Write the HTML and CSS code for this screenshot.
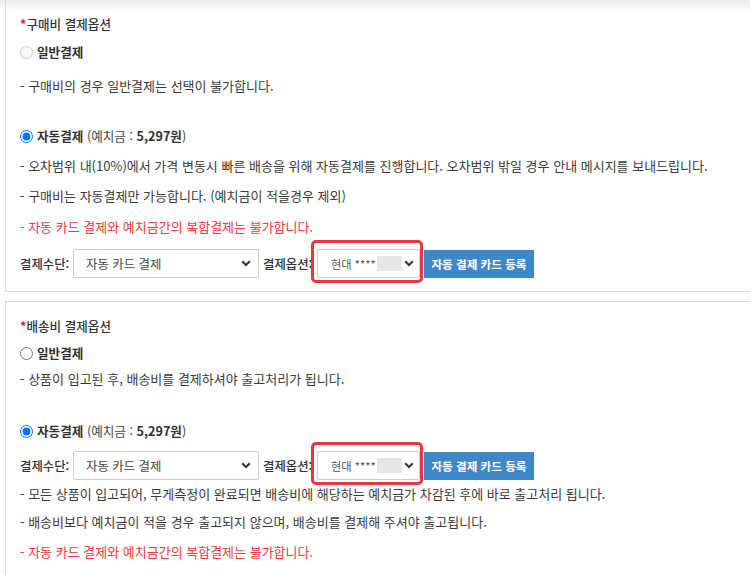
FILE: index.html
```html
<!DOCTYPE html>
<html lang="ko">
<head>
<meta charset="utf-8">
<link rel="stylesheet" href="styles.css">
</head>
<body>
<div class="page">
  <section class="panel panel-first">
    <div class="title"><span class="req">*</span>구매비 결제옵션</div>
    <label class="radio-row r-general1"><input type="radio" disabled><span class="opt-name">일반결제</span></label>
    <p class="line l-note1">- 구매비의 경우 일반결제는 선택이 불가합니다.</p>
    <label class="radio-row r-auto1"><input type="radio" checked name="p1"><span class="opt-name">자동결제</span>&nbsp;<span class="deposit">(예치금 : <b>5,297원</b>)</span></label>
    <p class="line l-a">- 오차범위 내(10%)에서 가격 변동시 빠른 배송을 위해 자동결제를 진행합니다. 오차범위 밖일 경우 안내 메시지를 보내드립니다.</p>
    <p class="line l-b">- 구매비는 자동결제만 가능합니다. (예치금이 적을경우 제외)</p>
    <p class="line warn l-c">- 자동 카드 결제와 예치금간의 복합결제는 불가합니다.</p>
    <div class="pay-row row1">
      <span class="lbl">결제수단:</span>
      <div class="select sel-method"><span>자동 카드 결제</span><svg class="chev" width="10" height="7" viewBox="0 0 10 7"><path d="M1.2 1.2L5 5l3.8-3.8" fill="none" stroke="#333" stroke-width="2"/></svg></div>
      <span class="lbl lbl2">결제옵션:</span>
      <div class="card-wrap">
        <div class="select sel-card"><span class="card-text">현대 ****<i class="mask"></i></span><svg class="chev" width="10" height="7" viewBox="0 0 10 7"><path d="M1.2 1.2L5 5l3.8-3.8" fill="none" stroke="#333" stroke-width="2"/></svg></div>
        <span class="highlight"></span>
      </div>
      <button class="btn">자동 결제 카드 등록</button>
    </div>
  </section>

  <section class="panel panel-second">
    <div class="title"><span class="req">*</span>배송비 결제옵션</div>
    <label class="radio-row r-general2"><input type="radio" name="p2"><span class="opt-name">일반결제</span></label>
    <p class="line l-note2">- 상품이 입고된 후, 배송비를 결제하셔야 출고처리가 됩니다.</p>
    <label class="radio-row r-auto2"><input type="radio" checked name="p2"><span class="opt-name">자동결제</span>&nbsp;<span class="deposit">(예치금 : <b>5,297원</b>)</span></label>
    <div class="pay-row row2">
      <span class="lbl">결제수단:</span>
      <div class="select sel-method"><span>자동 카드 결제</span><svg class="chev" width="10" height="7" viewBox="0 0 10 7"><path d="M1.2 1.2L5 5l3.8-3.8" fill="none" stroke="#333" stroke-width="2"/></svg></div>
      <span class="lbl lbl2">결제옵션:</span>
      <div class="card-wrap">
        <div class="select sel-card"><span class="card-text">현대 ****<i class="mask"></i></span><svg class="chev" width="10" height="7" viewBox="0 0 10 7"><path d="M1.2 1.2L5 5l3.8-3.8" fill="none" stroke="#333" stroke-width="2"/></svg></div>
        <span class="highlight"></span>
      </div>
      <button class="btn">자동 결제 카드 등록</button>
    </div>
    <p class="line l-d">- 모든 상품이 입고되어, 무게측정이 완료되면 배송비에 해당하는 예치금가 차감된 후에 바로 출고처리 됩니다.</p>
    <p class="line l-e">- 배송비보다 예치금이 적을 경우 출고되지 않으며, 배송비를 결제해 주셔야 출고됩니다.</p>
    <p class="line warn l-f">- 자동 카드 결제와 예치금간의 복합결제는 불가합니다.</p>
  </section>
</div>
</body>
</html>
```

FILE: styles.css
```css
html, body {
  margin: 0;
  padding: 0;
}
body {
  width: 750px;
  height: 575px;
  overflow: hidden;
  background: #fff linear-gradient(#ebebeb 0, #fff 12px) no-repeat;
  font-family: "Noto Sans CJK KR", "Noto Sans", sans-serif;
  font-size: 13px;
  color: #3a3a3a;
}
.page {
  padding-left: 5px;
}
.panel {
  border: 1px solid #dddddd;
  border-right: none;
  padding-left: 14px;
}
.panel-first {
  border-top: none;
  padding-top: 14px;
  padding-bottom: 13px;
}
.panel-second {
  margin-top: 9px;
  padding-top: 14px;
  padding-bottom: 20px;
}
.title {
  line-height: 20px;
  height: 20px;
  font-weight: 500;
  font-size: 12.6px;
  color: #333;
}
.req {
  color: #e8262b;
  font-weight: 700;
}
.radio-row {
  display: flex;
  align-items: center;
  height: 20px;
  line-height: 20px;
  font-size: 12.6px;
  white-space: nowrap;
}
.radio-row input {
  margin: 0 4px 0 0;
  width: 13px;
  height: 13px;
}
.opt-name {
  font-weight: 700;
  color: #333;
}
.deposit {
  color: #444;
}
.deposit b {
  font-weight: 700;
  color: #333;
}
.line {
  margin: 0;
  line-height: 20px;
  height: 20px;
  white-space: nowrap;
}
.warn {
  color: #ef3b3b;
}
.r-general1 { margin-top: 8px; }
.l-note1 { margin-top: 14px; }
.r-auto1 { margin-top: 30px; }
.l-a { margin-top: 10px; }
.l-b { margin-top: 10px; }
.l-c { margin-top: 11px; }
.row1 { margin-top: 12px; }

.r-general2 { margin-top: 7px; }
.l-note2 { margin-top: 6px; }
.r-auto2 { margin-top: 32px; }
.row2 { margin-top: 10px; }
.l-d { margin-top: 4px; }
.l-e { margin-top: 8px; }
.l-f { margin-top: 10px; }

.pay-row {
  display: flex;
  align-items: center;
  height: 29px;
}
.lbl {
  font-weight: 500;
  color: #333;
  font-size: 12.4px;
  width: 53px;
  flex: none;
  white-space: nowrap;
  overflow: hidden;
}
.lbl2 {
  width: 50px;
  margin-left: 4px;
}
.select {
  box-sizing: border-box;
  height: 29px;
  border: 1px solid #cfcfcf;
  border-radius: 2px;
  background: #fff;
  display: flex;
  align-items: center;
  justify-content: space-between;
  padding: 0 7px 0 12px;
  color: #444;
  flex: none;
  white-space: nowrap;
}
.sel-method {
  width: 186px;
  font-size: 12.4px;
}
.card-wrap {
  position: relative;
  flex: none;
  margin-left: 4px;
}
.sel-card {
  width: 103px;
  padding-left: 13px;
  padding-right: 5px;
  font-size: 11.2px;
  color: #555;
}
.card-text {
  display: flex;
  align-items: center;
}
.mask {
  display: inline-block;
  width: 25px;
  height: 15px;
  background: #e6e6e6;
  margin-left: 1px;
}
.chev {
  flex: none;
}
.highlight {
  position: absolute;
  left: -6px;
  right: -3px;
  top: -9px;
  bottom: -5px;
  border: 3px solid #e8383d;
  border-radius: 5px;
}
.btn {
  margin-left: 4px;
  height: 28px;
  width: 110px;
  border: none;
  background: #3f88c8;
  color: #fff;
  font-family: "Noto Sans CJK KR", sans-serif;
  font-weight: 700;
  font-size: 11.6px;
  padding: 0;
  flex: none;
}
```
